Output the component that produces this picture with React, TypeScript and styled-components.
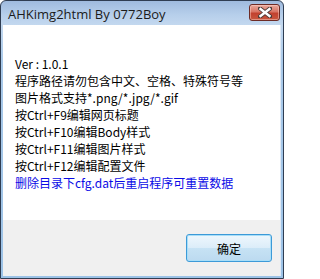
import React from "react";
import styled, { createGlobalStyle } from "styled-components";

const Global = createGlobalStyle`
  html, body { margin: 0; padding: 0; background: #ffffff; }
  body { width: 284px; height: 279px; overflow: hidden; }
`;

const Window = styled.div`
  box-sizing: border-box;
  width: 284px;
  height: 279px;
  border: 1px solid #2f3d52;
  border-radius: 6px 6px 0 0;
  background: linear-gradient(180deg, #9fbade 0px, #b7cfeb 14px, #c3d8ef 24px, #a9c9e9 60px, #9cc2e6 100%);
  display: flex;
  flex-direction: column;
  padding: 0 3px 2px 2px;
  font-family: "Noto Sans CJK SC", "Noto Sans", sans-serif;
`;

const TitleBar = styled.div`
  height: 24px;
  display: flex;
  align-items: center;
  justify-content: space-between;
  padding-left: 5px;
`;

const Title = styled.span`
  font-family: "Open Sans", "Noto Sans", sans-serif;
  font-size: 13px;
  color: #1b1b1b;
  margin-top: 1px;
`;

const CloseButton = styled.div`
  box-sizing: border-box;
  width: 31px;
  height: 17px;
  margin-top: -1px;
  border: 1px solid #6d2b25;
  border-radius: 3px;
  background: linear-gradient(180deg, #e9a99d 0%, #d87464 45%, #c2412f 55%, #c8573f 100%);
  box-shadow: inset 0 0 0 1px rgba(255, 220, 210, 0.45);
  display: flex;
  align-items: center;
  justify-content: center;
`;

const Client = styled.div`
  flex: 1;
  display: flex;
  flex-direction: column;
  background: #f0f0f0;
  box-shadow: 1px 0 0 #dfe9f5;
`;

const Content = styled.div`
  height: 195px;
  background: #ffffff;
  padding: 30px 0 0 12px;
  box-sizing: border-box;
`;

const Line = styled.div<{ $blue?: boolean }>`
  font-size: 12px;
  line-height: 17px;
  color: ${(p) => (p.$blue ? "#0a0ae6" : "#000000")};
  white-space: nowrap;
`;

const Footer = styled.div`
  flex: 1;
  display: flex;
  justify-content: flex-end;
  align-items: flex-start;
  padding: 14px 8px 0 0;
`;

const OkButton = styled.button`
  box-sizing: border-box;
  width: 86px;
  height: 28px;
  border: 1px solid #3c9ad8;
  border-radius: 3px;
  background: linear-gradient(180deg, #eef7fd 0%, #dcedf9 48%, #c6e2f4 52%, #bcdaf0 100%);
  box-shadow: inset 0 0 0 1px #a8def8;
  font-family: "Noto Sans CJK SC", sans-serif;
  font-size: 12px;
  color: #000;
  padding: 0;
`;

const lines = [
  "Ver : 1.0.1",
  "程序路径请勿包含中文、空格、特殊符号等",
  "图片格式支持*.png/*.jpg/*.gif",
  "按Ctrl+F9编辑网页标题",
  "按Ctrl+F10编辑Body样式",
  "按Ctrl+F11编辑图片样式",
  "按Ctrl+F12编辑配置文件",
];

export default function App() {
  return (
    <>
      <Global />
      <Window>
        <TitleBar>
          <Title>AHKimg2html By 0772Boy</Title>
          <CloseButton>
            <svg width="14" height="11" viewBox="0 0 14 11">
              <path
                d="M2 1.5 L12 9.5 M12 1.5 L2 9.5"
                stroke="#4a3a38"
                strokeWidth="4.2"
                strokeLinecap="square"
                fill="none"
              />
              <path
                d="M2.5 2 L11.5 9 M11.5 2 L2.5 9"
                stroke="#ffffff"
                strokeWidth="2.4"
                strokeLinecap="square"
                fill="none"
              />
            </svg>
          </CloseButton>
        </TitleBar>
        <Client>
          <Content>
            {lines.map((l) => (
              <Line key={l}>{l}</Line>
            ))}
            <Line $blue>删除目录下cfg.dat后重启程序可重置数据</Line>
          </Content>
          <Footer>
            <OkButton>确定</OkButton>
          </Footer>
        </Client>
      </Window>
    </>
  );
}
